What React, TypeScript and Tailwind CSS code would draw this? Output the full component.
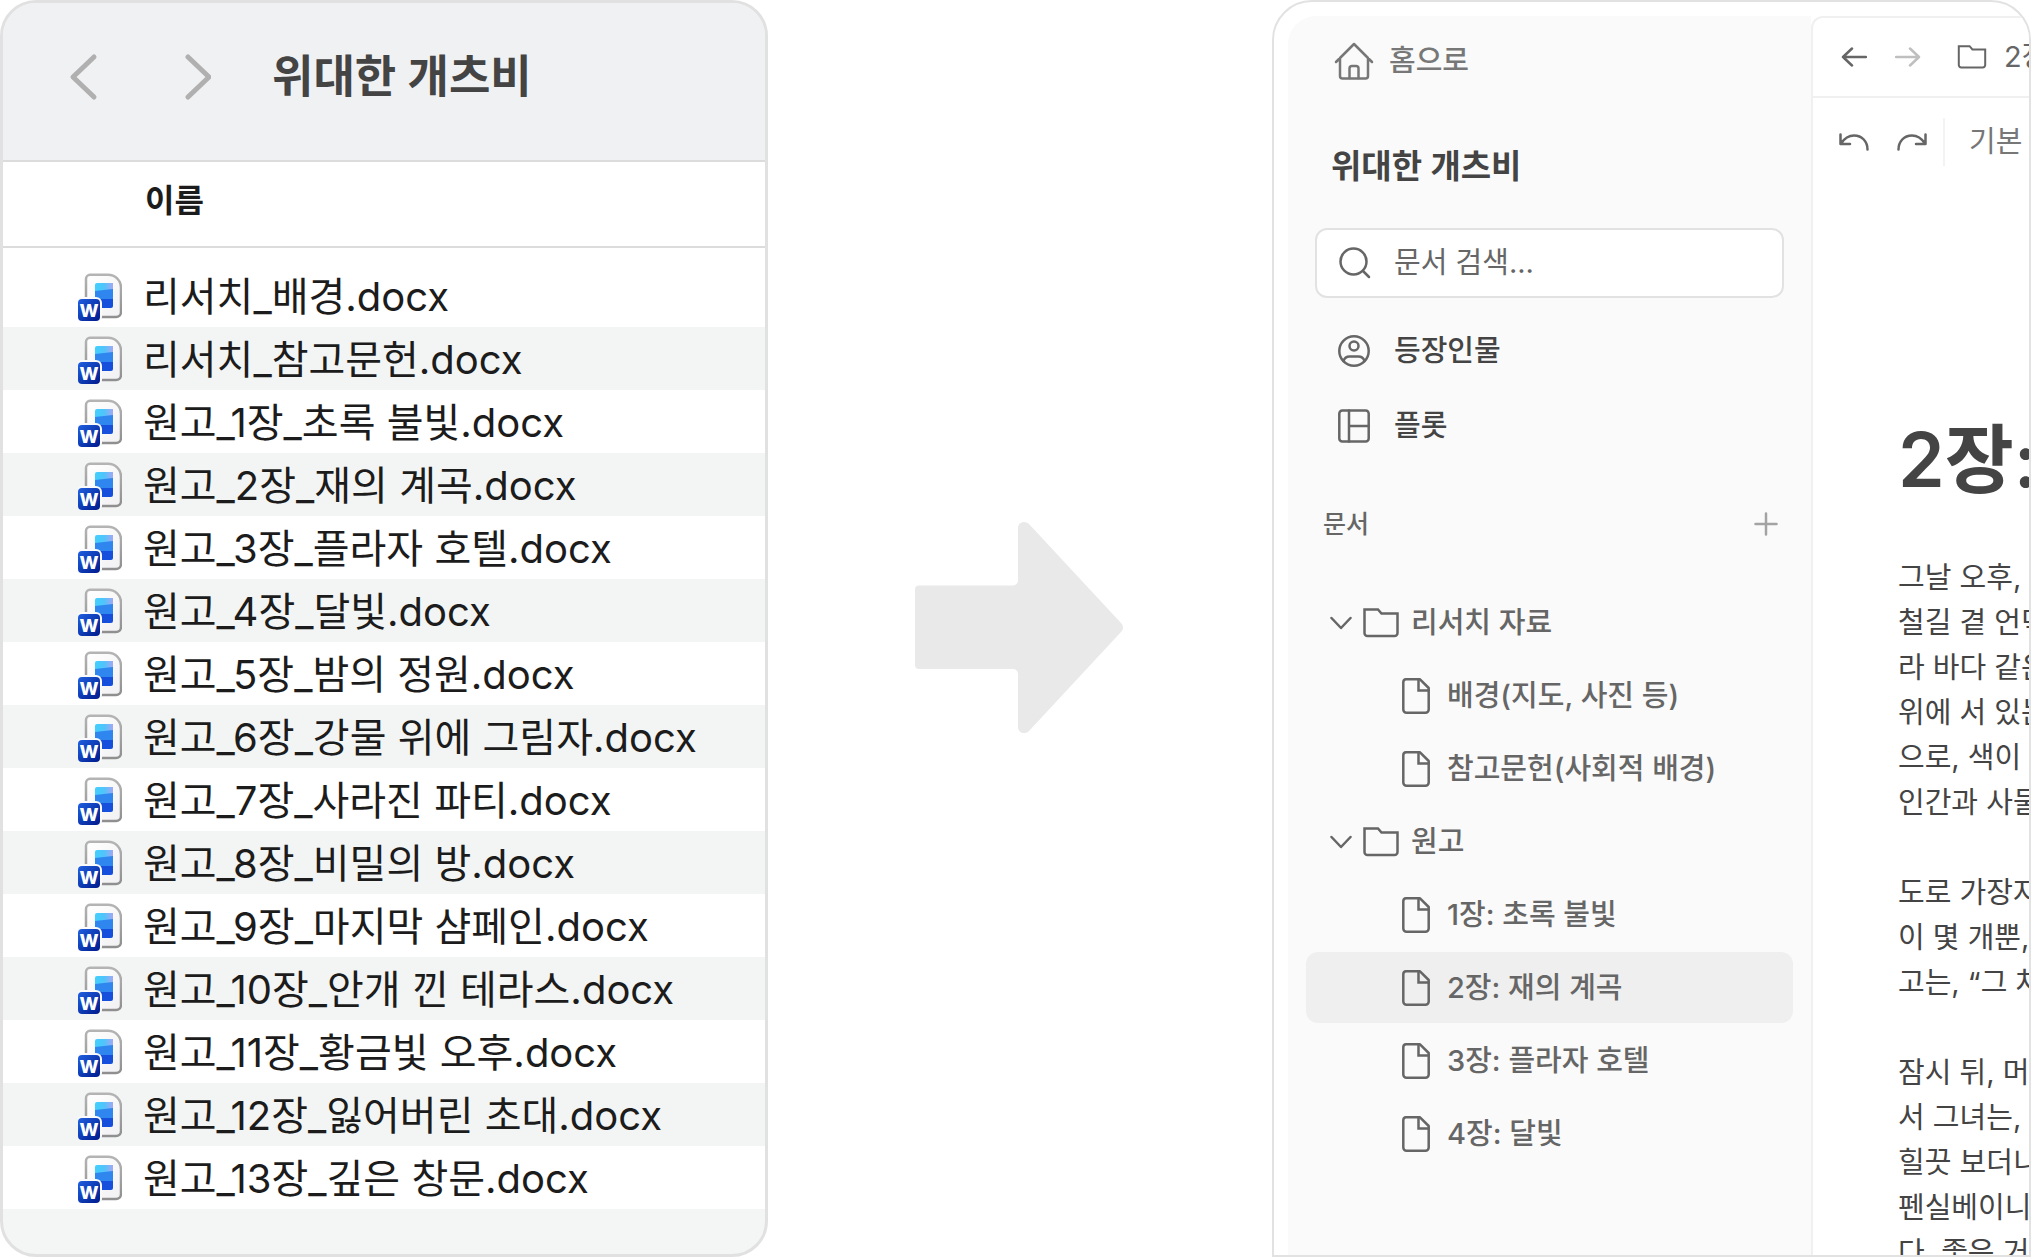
import type { ReactNode } from 'react';

const files = [
  '리서치_배경.docx',
  '리서치_참고문헌.docx',
  '원고_1장_초록 불빛.docx',
  '원고_2장_재의 계곡.docx',
  '원고_3장_플라자 호텔.docx',
  '원고_4장_달빛.docx',
  '원고_5장_밤의 정원.docx',
  '원고_6장_강물 위에 그림자.docx',
  '원고_7장_사라진 파티.docx',
  '원고_8장_비밀의 방.docx',
  '원고_9장_마지막 샴페인.docx',
  '원고_10장_안개 낀 테라스.docx',
  '원고_11장_황금빛 오후.docx',
  '원고_12장_잃어버린 초대.docx',
  '원고_13장_깊은 창문.docx',
];

const tree = [
  { name: '리서치 자료', docs: ['배경(지도, 사진 등)', '참고문헌(사회적 배경)'] },
  { name: '원고', docs: ['1장: 초록 불빛', '2장: 재의 계곡', '3장: 플라자 호텔', '4장: 달빛'] },
];

const selectedDoc = '2장: 재의 계곡';

const paragraphs = [
  ['그날 오후, 우', '철길 곁 언덕', '라 바다 같은', '위에 서 있는', '으로, 색이 바', '인간과 사물'],
  ['도로 가장자', '이 몇 개뿐,', '고는, “그 차'],
  ['잠시 뒤, 머틀', '서 그녀는, 나', '힐끗 보더니', '펜실베이니', '다. 좋은 거'],
];

function Icon({ className, children, box, stroke = 2.5 }: { className: string; children: ReactNode; box: string; stroke?: number }) {
  return (
    <svg
      viewBox={box}
      className={className}
      fill="none"
      stroke="currentColor"
      strokeWidth={stroke}
      strokeLinecap="round"
      strokeLinejoin="round"
      aria-hidden="true"
    >
      {children}
    </svg>
  );
}

function FolderIcon({ className }: { className: string }) {
  return (
    <Icon box="0 0 36 30" className={className}>
      <path d="M1.5 1.5H15l3.5 4h16V25a3 3 0 0 1-3 3h-27a3 3 0 0 1-3-3z" strokeLinejoin="miter" />
    </Icon>
  );
}

function DocIcon() {
  return (
    <Icon box="0 0 28 36" className="w-7 h-9 shrink-0">
      <path d="M4 1.300h14L26.700 10v21.500a3.200 3.200 0 0 1-3.200 3.200H4.500A3.200 3.200 0 0 1 1.300 31.500V4.200a2.900 2.900 0 0 1 2.700-2.900z" />
      <path d="M16.500 1.500V12.500H26.500" strokeLinejoin="miter" />
    </Icon>
  );
}

function WordIcon() {
  return (
    <svg viewBox="0 0 44 48" className="w-11 h-12 shrink-0" aria-hidden="true">
      <defs>
        <linearGradient id="sheet" x1="0" y1="0" x2="1" y2="1">
          <stop offset="0" stopColor="#ffffff" />
          <stop offset="1" stopColor="#f1f1f3" />
        </linearGradient>
        <linearGradient id="edge" x1="0" y1="0" x2="0" y2="1">
          <stop offset="0" stopColor="#b4b4b4" />
          <stop offset="1" stopColor="#8f8f8f" />
        </linearGradient>
        <linearGradient id="top" x1="0" y1="0" x2="1" y2="0">
          <stop offset="0" stopColor="#41d0ff" />
          <stop offset="0.500" stopColor="#4fc4fb" />
          <stop offset="1" stopColor="#a3a8f4" />
        </linearGradient>
        <linearGradient id="badge" x1="0" y1="0" x2="1" y2="1">
          <stop offset="0" stopColor="#1f5fe0" />
          <stop offset="1" stopColor="#001a8c" />
        </linearGradient>
      </defs>
      <path
        d="M12 1.800h18c7 0 13 5 13 13V39a5 5 0 0 1-5 5H12a4 4 0 0 1-4-4V6a4.200 4.200 0 0 1 4-4.200z"
        fill="url(#sheet)"
        stroke="url(#edge)"
        strokeWidth="2.500"
      />
      <path d="M19 10h16v9H17v-7a2 2 0 0 1 2-2z" fill="url(#top)" />
      <path d="M17 18l18-2v11H17z" fill="#2f86ee" />
      <path d="M17 26h18v7a2 2 0 0 1-2 2H17z" fill="#154fdb" />
      <rect x="-2" y="24" width="26" height="26" rx="6" fill="#fafafa" />
      <rect x="0" y="26" width="22" height="22" rx="4" fill="url(#badge)" />
      <text x="11" y="43.500" textAnchor="middle" fill="#ffffff" className="font-['Inter'] text-[18px] font-extrabold">
        W
      </text>
    </svg>
  );
}

function FinderWindow() {
  return (
    <section className="flex flex-col h-full overflow-hidden rounded-[36px] border-3 border-[#e1e1e1] bg-[#f4f5f5]">
      <header className="flex items-center h-[159px] shrink-0 pb-[10px] pl-16 border-b-2 border-[#dcdcdc] bg-[#f0f1f3]">
        <button aria-label="뒤로" className="text-[#b0b0b0]">
          <Icon box="0 0 32 48" className="w-8 h-12" stroke={5}>
            <path d="M27 4 6 24l21 20" />
          </Icon>
        </button>
        <button aria-label="앞으로" className="ml-20 text-[#b0b0b0]">
          <Icon box="0 0 32 48" className="w-8 h-12" stroke={5}>
            <path d="M9 4l21 20L9 44" />
          </Icon>
        </button>
        <h1 className="ml-[61px] text-[45px] leading-[60px] font-semibold text-[#444]">위대한 개츠비</h1>
      </header>
      <table className="w-full border-collapse text-left text-[#1c1c1c]">
        <thead>
          <tr className="h-[85px] bg-white border-b-2 border-[#dcdcdc]">
            <th className="pl-[142px] pb-1.5 text-[32px] leading-10 font-semibold">이름</th>
          </tr>
        </thead>
        <tbody className="bg-white before:block before:h-4">
          {files.map((file) => (
            <tr key={file} className="h-[63px] even:bg-[#f3f5f4]">
              <td className="p-0">
                <div className="flex items-center gap-[21px] pt-0.5 pl-[75px] text-[40px] leading-[48px] whitespace-nowrap">
                  <WordIcon />
                  {file}
                </div>
              </td>
            </tr>
          ))}
        </tbody>
      </table>
    </section>
  );
}

function Sidebar() {
  return (
    <aside className="flex flex-col w-[523px] shrink-0 px-[18px] rounded-tl-[28px] bg-[#fafafa] text-[29px] leading-9 text-[#666]">
      <a href="#home" className="flex items-center gap-[15px] mt-[26px] pl-7 text-[#777]">
        <Icon box="0 0 40 38" className="w-10 h-[38px]">
          <path d="M2 20 20 2l18 18M6 16v18a2.500 2.500 0 0 0 2.500 2.500h23A2.500 2.500 0 0 0 34 34V16" />
          <path d="M15.500 36V26.500a2.500 2.500 0 0 1 2.500-2.500h4a2.500 2.500 0 0 1 2.500 2.500V36" />
        </Icon>
        <span className="font-medium">홈으로</span>
      </a>
      <h2 className="mt-[66px] pl-[25px] text-[33px] leading-10 font-semibold text-[#444]">위대한 개츠비</h2>
      <label className="flex items-center gap-[23px] h-[70px] mt-[42px] mx-[9px] pl-[22px] rounded-xl border-2 border-[#e2e2e2] bg-white">
        <Icon box="0 0 32 32" className="w-8 h-8 shrink-0">
          <circle cx="14.500" cy="14.500" r="13" />
          <path d="M24 24l6 6" />
        </Icon>
        <input
          type="search"
          aria-label="문서 검색"
          placeholder="문서 검색..."
          className="w-full min-w-0 bg-transparent outline-none placeholder:text-[#666] placeholder:opacity-100"
        />
      </label>
      <nav className="flex flex-col gap-[39px] mt-[35px] pl-8">
        <a href="#characters" className="flex items-center gap-6">
          <Icon box="0 0 32 34" className="w-8 h-9">
            <circle cx="16" cy="17" r="14.700" />
            <circle cx="16" cy="12" r="4.500" />
            <path d="M5.500 27c1-3 3-4.500 6-4.500h9c3 0 5 1.500 6 4.500" />
          </Icon>
          <span className="font-medium text-[#444]">등장인물</span>
        </a>
        <a href="#plot" className="flex items-center gap-6">
          <Icon box="0 0 32 34" className="w-8 h-9">
            <rect x="1.300" y="1.500" width="29.400" height="31" rx="3" />
            <path d="M11 1.500v31M11 17h20" />
          </Icon>
          <span className="font-medium text-[#444]">플롯</span>
        </a>
      </nav>
      <div className="flex items-center justify-between h-10 mt-[60px] pl-[17px] pr-[15px]">
        <h3 className="text-[25px] font-medium">문서</h3>
        <button aria-label="문서 추가" className="text-[#a3a3a3]">
          <Icon box="0 0 24 24" className="w-6 h-6">
            <path d="M12 1.500v21M1.500 12h21" />
          </Icon>
        </button>
      </div>
      <ul className="flex flex-col gap-0.5 mt-[43px] font-medium">
        {tree.map((folder) => (
          <li key={folder.name}>
            <button className="flex items-center w-full h-[71px] pl-6">
              <Icon box="0 0 22 14" className="w-[22px] h-[14px]">
                <path d="M1.500 2 11 12l9.500-10" />
              </Icon>
              <FolderIcon className="w-9 h-[30px] ml-[11px] mr-3" />
              {folder.name}
            </button>
            <ul className="flex flex-col gap-0.5 mt-0.5">
              {folder.docs.map((doc) => (
                <li key={doc}>
                  <a
                    href="#doc"
                    className={`flex items-center gap-[17px] h-[71px] pl-24 rounded-xl ${doc === selectedDoc ? 'bg-[#efefef]' : ''}`}
                  >
                    <DocIcon />
                    {doc}
                  </a>
                </li>
              ))}
            </ul>
          </li>
        ))}
      </ul>
    </aside>
  );
}

function Editor() {
  return (
    <main className="flex-1 min-w-0 overflow-hidden whitespace-nowrap rounded-tl-xl border-l-2 border-t-2 border-[#f0f0f0] bg-white">
      <div className="flex items-center h-20 pl-7 border-b-2 border-[#f0f0f0] text-[29px] leading-9 text-[#666]">
        <button aria-label="이전 문서">
          <Icon box="0 0 26 20" className="w-[26px] h-5">
            <path d="M25 10H2M11 1.500 2 10l9 8.500" />
          </Icon>
        </button>
        <button aria-label="다음 문서" className="ml-7 text-[#bfbfbf]">
          <Icon box="0 0 26 20" className="w-[26px] h-5">
            <path d="M1 10h23M15 1.500l9 8.500-9 8.500" />
          </Icon>
        </button>
        <FolderIcon className="w-[30px] h-6 ml-9 mr-[17px] shrink-0" />
        <span>2장: 재의 계곡</span>
      </div>
      <div className="flex items-center h-[88px] pl-[26px] text-[29px] leading-9 text-[#777]">
        <button aria-label="실행 취소" className="text-[#666]">
          <Icon box="0 0 30 18" className="w-[30px] h-[18px]">
            <path d="M1.500 1.500v9.500H11M2 10.500C5 6 9.500 2.500 15 2.500c8 0 13.500 6 13.500 14" />
          </Icon>
        </button>
        <button aria-label="다시 실행" className="ml-7 text-[#666]">
          <Icon box="0 0 30 18" className="w-[30px] h-[18px]">
            <path d="M28.500 1.500v9.500H19M28 10.500C25 6 20.500 2.500 15 2.500 7 2.500 1.500 8.500 1.500 16.500" />
          </Icon>
        </button>
        <div className="w-0.5 h-12 mx-4 shrink-0 bg-[#f3f3f3]" />
        <button className="ml-2">기본 스타일</button>
      </div>
      <article className="pl-[85px] text-[#444]">
        <h1 className="pt-56 text-[75px] leading-[100px] font-semibold">2장: 재의 계곡</h1>
        {paragraphs.map((lines) => (
          <p key={lines[0]} className="mt-[45px] text-[29px] leading-[45px]">
            {lines.map((line) => (
              <span key={line} className="block">
                {line}
              </span>
            ))}
          </p>
        ))}
      </article>
    </main>
  );
}

export default function App() {
  return (
    <div className="grid grid-cols-[768fr_504fr_759fr] h-screen overflow-hidden bg-white font-['Inter','Noto_Sans_CJK_KR',sans-serif]">
      <FinderWindow />
      <div className="flex items-center justify-center pb-0.5 pr-0.5">
        <svg viewBox="0 0 210 214" className="w-[210px]" aria-hidden="true">
          <path
            d="M5 64.500H99a5 5 0 0 0 5-5V7c0-6 7-8 11-4l92 99a6 6 0 0 1 0 9l-92 99c-4 4-11 2-11-4v-53a5 5 0 0 0-5-5H5a4 4 0 0 1-4-4V68.500a4 4 0 0 1 4-4z"
            fill="#e9e9e9"
          />
        </svg>
      </div>
      <div className="flex min-w-0 h-full overflow-hidden pt-[14px] pl-[14px] rounded-t-[40px] border-2 border-[#e2e2e2]">
        <Sidebar />
        <Editor />
      </div>
    </div>
  );
}
